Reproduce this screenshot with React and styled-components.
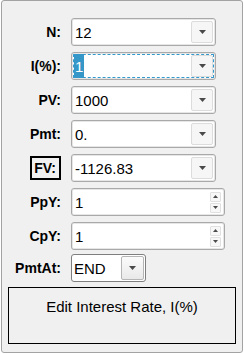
import React from "react"
import styled, { createGlobalStyle } from "styled-components"

const Global = createGlobalStyle`
html, body {
  margin: 0;
  padding: 0;
  background: #ffffff;
}
body {
  font-family: "Liberation Sans", Arial, sans-serif;
}
`

const Panel = styled.div`
box-sizing: border-box;
margin-left: 1px;
width: 242px;
height: 353px;
border: 1px solid #a3a3a3;
border-radius: 3px;
background: #f0f0f0;
padding-top: 17px;
display: flex;
flex-direction: column;
`

const Form = styled.div`
display: flex;
flex-direction: column;
gap: 6px;
`

const Row = styled.div`
display: flex;
align-items: center;
height: 28px;
margin-top: ${p => p.$shift || 0}px;
`

const LabelCell = styled.div`
width: 59px;
margin-right: 10px;
display: flex;
justify-content: flex-end;
`

const Label = styled.span`
box-sizing: border-box;
font-size: 14px;
font-weight: bold;
color: #000;
display: inline-flex;
align-items: center;
${p => p.$focused && `
  height: 24px;
  padding: 0 3px 0 2px;
  border: 2px solid #000;
`}
`

const Field = styled.div`
box-sizing: border-box;
position: relative;
width: ${p => p.$width}px;
height: 28px;
border: 1px solid #a9a9a9;
border-radius: 3px;
background: #fff;
box-shadow: inset 0 0 0 1px #e6e6e6;
display: flex;
align-items: center;
padding: 2px;
`

const FocusRing = styled.div`
position: absolute;
inset: 1px;
border: 1px dashed #3399cc;
border-radius: 1px;
pointer-events: none;
`

const Value = styled.div`
flex: 1;
font-size: 15px;
color: #000;
padding-left: 1px;
display: flex;
align-items: center;
height: 100%;
`

const Selected = styled.span`
background: #3597c8;
color: #fff;
height: 24px;
display: inline-flex;
align-items: center;
padding: 0 1px;
margin-left: -1px;
`

const DropButton = styled.div`
box-sizing: border-box;
width: 22px;
height: 22px;
border: 1px solid #dcdcdc;
border-radius: 2px;
background: #f6f6f6;
display: flex;
align-items: center;
justify-content: center;
`

const OldField = styled(Field)`
border-color: #7f7f7f;
border-radius: 3px;
box-shadow: none;
padding: 1px;
`

const OldButton = styled.div`
box-sizing: border-box;
width: 23px;
height: 24px;
border: 1px solid #b5b5b5;
border-radius: 2px;
background: linear-gradient(#fbfbfb, #e9e9e9);
display: flex;
align-items: center;
justify-content: center;
`

const Spinner = styled.div`
display: flex;
flex-direction: column;
gap: 1px;
margin-right: 1px;
`

const SpinButton = styled.div`
box-sizing: border-box;
width: 11px;
height: 10px;
border: 1px solid #e0e0e0;
border-radius: 1px;
background: #f7f7f7;
display: flex;
align-items: center;
justify-content: center;
`

const Message = styled.div`
box-sizing: border-box;
margin: 5px 6px 0;
height: 57px;
border: 1px solid #000;
font-size: 15px;
color: #000;
text-align: center;
padding-top: 10px;
`

const Arrow = ({ up, w = 7, h = 4 }) => (
  <svg width={w} height={h} viewBox={`0 0 ${w} ${h}`}>
    <polygon
      points={up ? `0,${h} ${w},${h} ${w / 2},0` : `0,0 ${w},0 ${w / 2},${h}`}
      fill="#4a4a4a"
    />
  </svg>
)

const Combo = ({ value, focused }) => (
  <Field $width={145}>
    {focused && <FocusRing />}
    <Value>{focused ? <Selected>{value}</Selected> : value}</Value>
    <DropButton><Arrow /></DropButton>
  </Field>
)

const Spin = ({ value }) => (
  <Field $width={154}>
    <Value>{value}</Value>
    <Spinner>
      <SpinButton><Arrow up w={5} h={3} /></SpinButton>
      <SpinButton><Arrow w={5} h={3} /></SpinButton>
    </Spinner>
  </Field>
)

const fields = [
  { label: "N:", value: "12", kind: "combo" },
  { label: "I(%):", value: "1", kind: "combo", focused: true },
  { label: "PV:", value: "1000", kind: "combo" },
  { label: "Pmt:", value: "0.", kind: "combo" },
  { label: "FV:", value: "-1126.83", kind: "combo", boxed: true },
  { label: "PpY:", value: "1", kind: "spin" },
  { label: "CpY:", value: "1", kind: "spin" },
]

const App = () => {
  return (
    <>
      <Global />
      <Panel>
        <Form>
          {fields.map(f => (
            <Row key={f.label}>
              <LabelCell><Label $focused={f.boxed}>{f.label}</Label></LabelCell>
              {f.kind === "combo"
                ? <Combo value={f.value} focused={f.focused} />
                : <Spin value={f.value} />}
            </Row>
          ))}
          <Row $shift={-2}>
            <LabelCell><Label>PmtAt:</Label></LabelCell>
            <OldField $width={75}>
              <Value>END</Value>
              <OldButton><Arrow /></OldButton>
            </OldField>
          </Row>
        </Form>
        <Message>Edit Interest Rate, I(%)</Message>
      </Panel>
    </>
  )
}

export default App
